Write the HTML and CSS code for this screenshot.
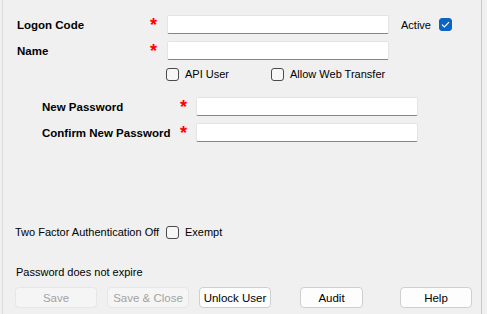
FILE: index.html
```html
<!DOCTYPE html>
<html lang="en">
<head>
    <meta charset="UTF-8">
    <title>User</title>
    <link rel="stylesheet" href="styles.css">
</head>
<body>
    <div class="window">
        <div class="form-row first">
            <label class="field-label">Logon Code</label>
            <span class="req">*</span>
            <input class="text-box" type="text">
            <span class="active-label">Active</span>
            <span class="check checked">
                <svg width="9" height="7" viewBox="0 0 9 7"><path d="M1 3.6 L3.4 6 L8 1.2" fill="none" stroke="#fff" stroke-width="1.2"/></svg>
            </span>
        </div>

        <div class="form-row second">
            <label class="field-label">Name</label>
            <span class="req">*</span>
            <input class="text-box" type="text">
        </div>

        <div class="option-row">
            <span class="check"></span>
            <span class="check-text api">API User</span>
            <span class="check"></span>
            <span class="check-text">Allow Web Transfer</span>
        </div>

        <div class="form-row pw first-pw">
            <label class="field-label pw-label">New Password</label>
            <span class="req">*</span>
            <input class="text-box pw-box" type="password">
        </div>

        <div class="form-row pw second-pw">
            <label class="field-label pw-label">Confirm New Password</label>
            <span class="req">*</span>
            <input class="text-box pw-box" type="password">
        </div>

        <div class="twofactor-row">
            <span class="plain tf-text">Two Factor Authentication Off</span>
            <span class="check"></span>
            <span class="check-text">Exempt</span>
        </div>

        <div class="expire-row plain">Password does not expire</div>

        <div class="button-row">
            <button class="btn save" disabled>Save</button>
            <button class="btn save-close" disabled>Save &amp; Close</button>
            <button class="btn unlock">Unlock User</button>
            <button class="btn audit">Audit</button>
            <button class="btn help">Help</button>
        </div>
    </div>
</body>
</html>
```

FILE: styles.css
```css
body {
    margin: 0;
    background-color: #f0f0f0;
    font-family: "Liberation Sans", Arial, sans-serif;
    font-size: 11px;
    color: #000;
}

.window {
    width: 480px;
    height: 314px;
    margin-left: 2px;
    border-left: 1px solid #dcdcdc;
    border-right: 1px solid #c8c8c8;
    box-sizing: border-box;
    display: flex;
    flex-direction: column;
    white-space: nowrap;
}

/* 入力行 */
.form-row {
    display: flex;
    align-items: center;
    height: 19px;
    padding-left: 14px;
}

.form-row.first { margin-top: 15px; }
.form-row.second { margin-top: 7px; }

.field-label {
    width: 133px;
    font-weight: bold;
    font-size: 11.5px;
}

.pw .pw-label { width: 138px; }
.form-row.pw { padding-left: 39px; }
.form-row.first-pw { margin-top: 16px; }
.form-row.second-pw { margin-top: 7px; }

.req {
    width: 17px;
    color: #ff0000;
    font-weight: bold;
    font-size: 18px;
    line-height: 19px;
    position: relative;
    top: 1px;
}

.pw .req { width: 16px; }

.text-box {
    width: 222px;
    height: 19px;
    box-sizing: border-box;
    border: 1px solid #e4e4e4;
    border-bottom-color: #858585;
    border-radius: 2px;
    background: #fff;
    padding: 0 4px;
    margin: 0;
    outline: none;
}

.active-label {
    margin-left: 12px;
    width: 38px;
}

/* チェックボックス */
.check {
    width: 13px;
    height: 13px;
    box-sizing: border-box;
    border: 1px solid #4a4a4a;
    border-radius: 3px;
    background: #f6f6f6;
    display: inline-flex;
    align-items: center;
    justify-content: center;
    flex-shrink: 0;
}

.check.checked {
    background: #0b63c4;
    border-color: #0b63c4;
}

.check-text {
    margin-left: 6px;
}

.check-text.api {
    width: 86px;
}

.option-row {
    display: flex;
    align-items: center;
    height: 14px;
    margin-top: 7px;
    padding-left: 163px;
}

.twofactor-row {
    display: flex;
    align-items: center;
    height: 14px;
    margin-top: 83px;
    padding-left: 12px;
}

.tf-text {
    width: 151px;
}

.expire-row {
    margin-top: 26px;
    padding-left: 13px;
    line-height: 14px;
}

/* ボタン */
.button-row {
    display: flex;
    margin-top: 8px;
    padding-left: 12px;
}

.btn {
    height: 21px;
    box-sizing: border-box;
    font-family: "Liberation Sans", Arial, sans-serif;
    font-size: 11.5px;
    color: #000;
    background: #fdfdfd;
    border: 1px solid #cfcfcf;
    border-radius: 4px;
    padding: 0;
    margin: 0;
}

.btn:disabled {
    color: #a3a3a3;
    background: #f5f5f5;
    border-color: #e6e6e6;
}

.save { width: 82px; }
.save-close { width: 82px; margin-left: 10px; }
.unlock { width: 72px; margin-left: 10px; }
.audit { width: 63px; margin-left: 29px; }
.help { width: 72px; margin-left: 37px; }
```
